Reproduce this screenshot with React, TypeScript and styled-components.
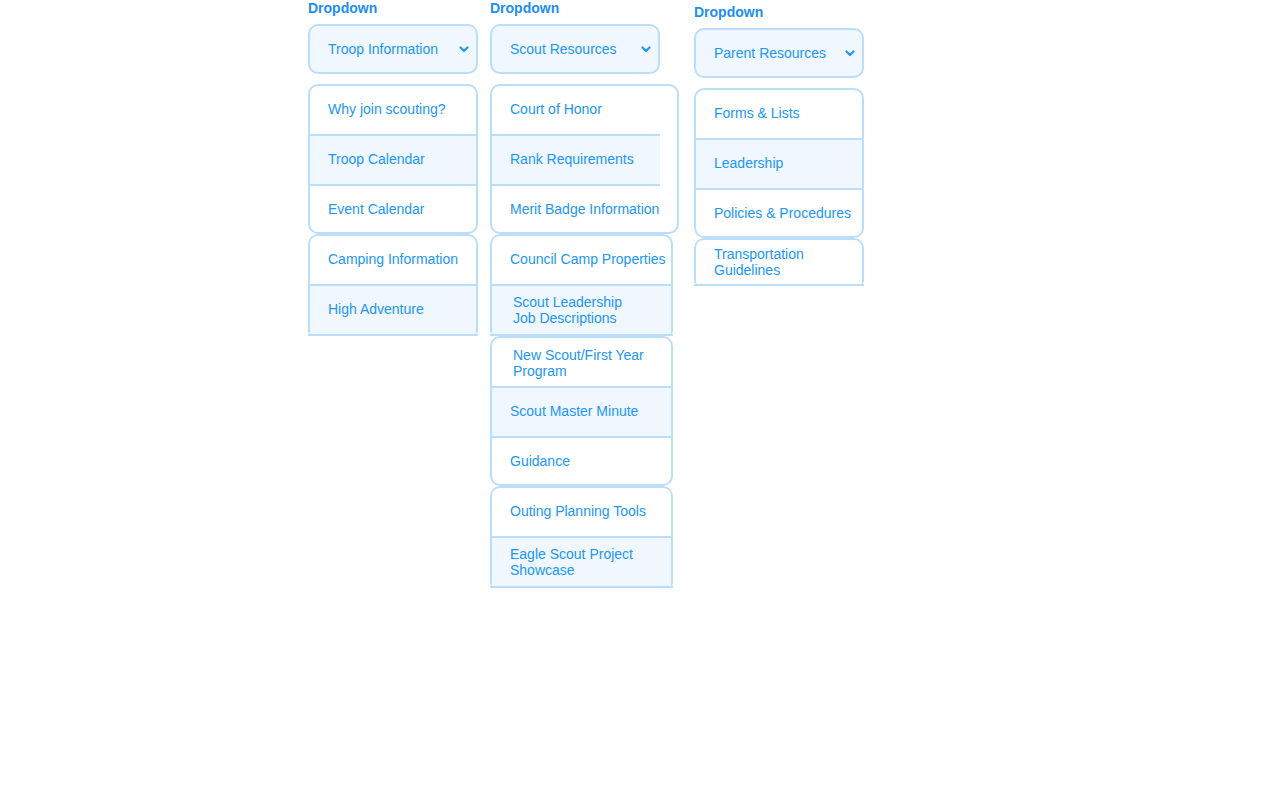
import React from "react";
import styled, { createGlobalStyle } from "styled-components";

const Global = createGlobalStyle`
  html, body { margin: 0; padding: 0; background: #ffffff; }
  body { font-family: "Liberation Sans", Arial, sans-serif; }
`;

const BLUE = "#2196f3";
const BORDER = "#bbdefb";
const LIGHT = "#f0f7fe";

const Page = styled.div`
  display: flex;
  align-items: flex-start;
  padding-left: 308px;
`;

const Column = styled.div<{ $w: number; $top?: number }>`
  width: ${(p) => p.$w}px;
  margin-top: ${(p) => p.$top ?? 0}px;
  display: flex;
  flex-direction: column;
  align-items: flex-start;
`;

const Label = styled.div`
  font-size: 14px;
  line-height: 16px;
  font-weight: bold;
  color: #1e8eef;
  margin-bottom: 8px;
`;

const Select = styled.div`
  box-sizing: border-box;
  width: 170px;
  height: 50px;
  border: 2px solid ${BORDER};
  border-radius: 10px;
  background: ${LIGHT};
  display: flex;
  align-items: center;
  justify-content: space-between;
  padding: 0 7px 0 18px;
  color: ${BLUE};
  font-size: 14px;
  margin-bottom: 10px;
`;

const Chevron = () => (
  <svg width="10" height="7" viewBox="0 0 10 7">
    <polyline points="1.5,1.5 5,5 8.5,1.5" fill="none" stroke={BLUE} strokeWidth="2.2" strokeLinecap="round" strokeLinejoin="round" />
  </svg>
);

const Group = styled.div<{ $w: number; $open?: boolean }>`
  box-sizing: border-box;
  width: ${(p) => p.$w}px;
  border: 2px solid ${BORDER};
  border-bottom: ${(p) => (p.$open ? "none" : `2px solid ${BORDER}`)};
  border-radius: ${(p) => (p.$open ? "10px 10px 3px 3px" : "10px")};
  overflow: hidden;
  background: #ffffff;
  display: flex;
  flex-direction: column;
  align-items: flex-start;
`;

const GroupEnd = styled.div<{ $w: number }>`
  width: ${(p) => p.$w}px;
  height: 2px;
  background: ${BORDER};
`;

const Item = styled.div<{
  $w?: number;
  $h?: number;
  $indent?: number;
  $last?: boolean;
  $open?: boolean;
  $padTop?: number;
  $padBottom?: number;
}>`
  box-sizing: border-box;
  width: ${(p) => (p.$w ? `${p.$w}px` : "100%")};
  height: ${(p) => (p.$h ? p.$h : p.$last ? (p.$open ? 48 : 46) : 50)}px;
  border-bottom: ${(p) => (p.$last ? "none" : `2px solid ${BORDER}`)};
  padding: ${(p) => p.$padTop ?? 0}px 4px ${(p) => p.$padBottom ?? 0}px ${(p) => p.$indent ?? 18}px;
  display: flex;
  align-items: center;
  color: ${BLUE};
  font-size: 14px;
  line-height: 16px;
  white-space: pre;
  flex-shrink: 0;
  &:nth-child(even) {
    background: ${LIGHT};
  }
`;

type ItemDef = { t: string; w?: number; h?: number; indent?: number };
type GroupDef = { w: number; open?: boolean; items: ItemDef[] };

const columns: { w: number; top?: number; title: string; groups: GroupDef[] }[] = [
  {
    w: 182,
    title: "Troop Information",
    groups: [
      { w: 170, items: [{ t: "Why join scouting?" }, { t: "Troop Calendar" }, { t: "Event Calendar" }] },
      { w: 170, open: true, items: [{ t: "Camping Information" }, { t: "High Adventure" }] },
    ],
  },
  {
    w: 204,
    title: "Scout Resources",
    groups: [
      {
        w: 189,
        items: [
          { t: "Court of Honor", w: 168 },
          { t: "Rank Requirements", w: 168 },
          { t: "Merit Badge Information", w: 185 },
        ],
      },
      {
        w: 183,
        open: true,
        items: [{ t: "Council Camp Properties" }, { t: "Scout Leadership\nJob Descriptions", indent: 21 }],
      },
      {
        w: 183,
        items: [
          { t: "New Scout/First Year\nProgram", indent: 21 },
          { t: "Scout Master Minute" },
          { t: "Guidance" },
        ],
      },
      { w: 183, open: true, items: [{ t: "Outing Planning Tools" }, { t: "Eagle Scout Project\nShowcase" }] },
    ],
  },
  {
    w: 170,
    top: 4,
    title: "Parent Resources",
    groups: [
      { w: 170, items: [{ t: "Forms & Lists" }, { t: "Leadership" }, { t: "Policies & Procedures" }] },
      { w: 170, open: true, items: [{ t: "Transportation\nGuidelines", h: 44 }] },
    ],
  },
];

export default function App() {
  return (
    <>
      <Global />
      <Page>
        {columns.map((c) => (
          <Column key={c.title} $w={c.w} $top={c.top}>
            <Label>Dropdown</Label>
            <Select>
              <span>{c.title}</span>
              <Chevron />
            </Select>
            {c.groups.map((g, gi) => (
              <React.Fragment key={gi}>
                <Group $w={g.w} $open={g.open}>
                  {g.items.map((it, ii) => {
                    const last = ii === g.items.length - 1;
                    const multi = it.t.includes("\n");
                    const lastClosed = last && !g.open;
                    return (
                      <Item
                        key={it.t}
                        $w={it.w}
                        $h={it.h}
                        $indent={it.indent}
                        $last={last}
                        $open={g.open}
                        $padBottom={!multi && !lastClosed ? 2 : 0}
                        $padTop={multi && !last ? 2 : 0}
                      >
                        {it.t}
                      </Item>
                    );
                  })}
                </Group>
                {g.open && <GroupEnd $w={g.w} />}
              </React.Fragment>
            ))}
          </Column>
        ))}
      </Page>
    </>
  );
}
